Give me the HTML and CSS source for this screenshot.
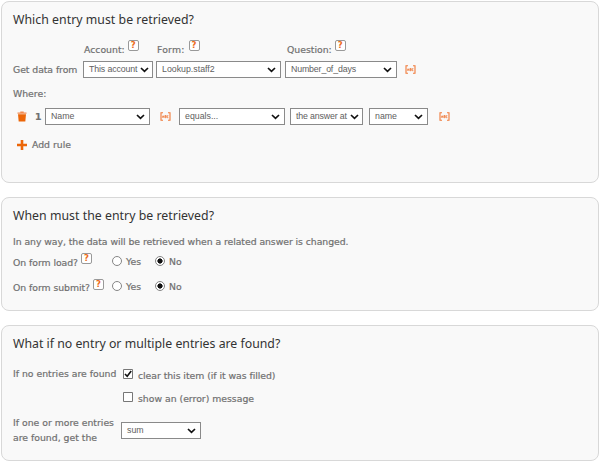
FILE: index.html
```html
<!DOCTYPE html>
<html lang="en">
<head>
<meta charset="utf-8">
<title>Lookup settings</title>
<link rel="stylesheet" href="styles.css">
</head>
<body>
<svg class="defs" aria-hidden="true">
<symbol id="chevron" viewBox="0 0 9 6"><path d="M1 1l3.5 3.3L8 1" fill="none" stroke="#111" stroke-width="1.7"/></symbol>
<symbol id="field" viewBox="0 0 11 9"><path d="M3 .8H1v7.4h2M8 .8h2v7.4H8" fill="none" stroke="#f07a3a" stroke-width="1.1"/><path d="M2.3 5.7l.8-2 .8 2M2.6 5h1M4.9 3.5v2.2h1.2V3.5zM4.9 4.6h1.2M8.4 3.7H7.2v2h1.2" fill="none" stroke="#f07a3a" stroke-width=".8"/></symbol>
</svg>
<main>
<section class="panel retrieve">
  <h2 class="t1">Which entry must be retrieved?</h2>
  <div class="labels">
    <label class="account">Account: <b class="help">?</b></label>
    <label class="form">Form: <b class="help">?</b></label>
    <label class="question">Question: <b class="help">?</b></label>
  </div>
  <div class="row source">
    <span class="lead">Get data from</span>
    <div class="select s-account"><span>This account</span><svg><use href="#chevron"/></svg></div>
    <div class="select s-form"><span>Lookup.staff2</span><svg><use href="#chevron"/></svg></div>
    <div class="select s-question"><span>Number_of_days</span><svg><use href="#chevron"/></svg></div>
    <svg class="field"><use href="#field"/></svg>
  </div>
  <p class="where">Where:</p>
  <div class="row rule">
    <svg class="trash" viewBox="0 0 10 11"><path d="M.5 1.5h2.8V.4h3.4v1.1h2.8v1.3h-9z" fill="#f28a50"/><path d="M1 3.3h8l-.7 7.2H1.7z" fill="#ec6608"/></svg>
    <b class="num">1</b>
    <div class="select s-name"><span>Name</span><svg><use href="#chevron"/></svg></div>
    <svg class="field"><use href="#field"/></svg>
    <div class="select s-equals"><span>equals...</span><svg><use href="#chevron"/></svg></div>
    <div class="select s-answer"><span>the answer at</span><svg><use href="#chevron"/></svg></div>
    <div class="select s-value"><span>name</span><svg><use href="#chevron"/></svg></div>
    <svg class="field"><use href="#field"/></svg>
  </div>
  <div class="row add">
    <svg class="plus" viewBox="0 0 10 10"><path d="M5 0v10M0 5h10" stroke="#ec6608" stroke-width="2.6"/></svg>
    <span>Add rule</span>
  </div>
</section>

<section class="panel timing">
  <h2 class="t2">When must the entry be retrieved?</h2>
  <p class="info">In any way, the data will be retrieved when a related answer is changed.</p>
  <div class="option">
    <span class="name load">On form load? <b class="help">?</b></span>
    <label class="yes"><i class="radio"></i>Yes</label>
    <label><i class="radio on"></i>No</label>
  </div>
  <div class="option">
    <span class="name submit">On form submit? <b class="help">?</b></span>
    <label class="yes"><i class="radio"></i>Yes</label>
    <label><i class="radio on"></i>No</label>
  </div>
</section>

<section class="panel fallback">
  <h2 class="t3">What if no entry or multiple entries are found?</h2>
  <div class="none">
    <span class="caption">If no entries are found</span>
    <div class="checks">
      <label><svg class="check" viewBox="0 0 10 10"><path d="M.5.5h9v9h-9z" fill="#fff" stroke="#777"/><path d="M2 5l2.2 2.3L8.2 2" fill="none" stroke="#111" stroke-width="1.6"/></svg><span class="clear">clear this item (if it was filled)</span></label>
      <label><svg class="check" viewBox="0 0 10 10"><path d="M.5.5h9v9h-9z" fill="#fff" stroke="#777"/></svg><span class="show">show an (error) message</span></label>
    </div>
  </div>
  <div class="many">
    <span class="caption">If one or more entries<br>are found, get the</span>
    <div class="select s-sum"><span>sum</span><svg><use href="#chevron"/></svg></div>
  </div>
</section>
</main>
</body>
</html>
```

FILE: styles.css
```css
* { box-sizing: border-box; }
body { margin: 0; background: #fff; color: #707070; font: 9.3px/14px "DejaVu Sans", Verdana, sans-serif; -webkit-text-stroke: .2px; }
main { display: flex; flex-direction: column; gap: 14px; padding: 1px 1px 0; }
p, h2 { margin: 0; }
.defs { position: absolute; width: 0; height: 0; }
.panel { border: 1px solid #d8d8d8; border-radius: 8px; background: #f9f9f9; padding: 8px 11px 0; white-space: nowrap; }
.retrieve { height: 182px; }
.timing { height: 114px; }
.fallback { height: 136px; }
h2 { height: 20px; color: #333; font: 400 12.3px/20px "Noto Sans", sans-serif; -webkit-text-stroke: 0; }
.t1, .t2 { letter-spacing: .03px; }
.row { display: flex; align-items: center; }
.labels { display: flex; height: 22px; margin-top: 9px; padding-left: 71px; }
.labels label { display: flex; line-height: 21px; }
.account { width: 73px; }
.form { width: 130px; letter-spacing: .2px; }
.help { flex: none; display: inline-block; width: 11px; height: 11px; margin-left: 3px; border: 1px solid #999; border-radius: 2px; background: #fff; color: #ed6c20; font: 700 8.5px/9px "DejaVu Sans", sans-serif; letter-spacing: 0; text-align: center; -webkit-text-stroke: 0; }
.labels .help { margin-top: 1px; }
.form .help { margin-left: 4px; }
.select { flex: none; display: flex; align-items: center; justify-content: space-between; height: 17px; padding: 0 4px 0 5px; border: 1px solid #8a8a8a; background: #fff; color: #606060; font: 8.8px/15px "Liberation Sans", sans-serif; -webkit-text-stroke: 0; }
.select svg { flex: none; width: 9px; height: 6px; }
.source { height: 17px; }
.lead { width: 70px; letter-spacing: -.06px; }
.s-account { width: 70px; margin-right: 3px; padding-right: 3px; letter-spacing: -.12px; }
.s-form { width: 125px; margin-right: 4px; }
.s-question { width: 112px; margin-right: 8px; letter-spacing: -.15px; }
.field { flex: none; width: 11px; height: 9px; }
.where { margin-top: 9px; }
.rule { height: 17px; margin-top: 7px; padding-left: 4px; }
.trash { width: 10px; height: 11px; margin-right: 8px; }
.num { width: 10px; }
.s-name { width: 105px; margin-right: 10px; }
.s-equals { width: 106px; margin: 0 5px 0 8px; }
.s-answer { width: 73px; margin-right: 6px; padding-right: 3px; letter-spacing: -.15px; }
.s-value { width: 59px; margin-right: 11px; }
.add { height: 14px; margin-top: 13px; padding-left: 4px; }
.plus { width: 10px; height: 10px; margin-right: 5px; }
.info { margin-top: 9px; letter-spacing: -.05px; }
.option { display: flex; height: 20px; }
.option + .option { margin-top: 5px; }
.name { display: flex; width: 99px; line-height: 28px; }
.load { letter-spacing: -.05px; }
.submit { letter-spacing: -.05px; }
.name .help { margin-top: 4px; }
.submit .help { margin-top: 5px; }
.info + .option { margin-top: 0; }
.option label { display: flex; line-height: 26px; }
.yes { width: 43px; }
.radio { width: 10px; height: 10px; margin: 7px 4px 0 0; border: 1px solid #858585; border-radius: 50%; background: #fff; }
.radio.on { background: radial-gradient(circle, #111 0 2.3px, #fff 2.9px); }
.none { display: flex; margin-top: 13px; height: 48px; }
.caption { width: 110px; }
.checks label { display: flex; height: 23px; line-height: 17px; }
.check { width: 10px; height: 10px; margin: 2px 5px 0 0; }
.clear { letter-spacing: -.04px; }
.many { display: flex; line-height: 15px; }
.many .caption { width: 108px; }
.s-sum { width: 80px; margin-top: 7px; }
```
